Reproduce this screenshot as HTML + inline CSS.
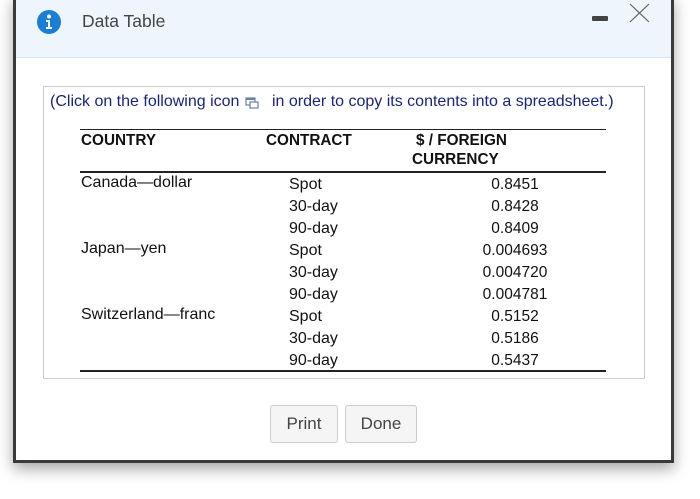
<!DOCTYPE html>
<html><head><style>
body{margin:0;width:700px;height:499px;background:#fff;position:relative;overflow:hidden;font-family:"Liberation Sans",Arial,sans-serif;}
.dlg{position:absolute;left:13px;top:-5px;width:655px;height:465px;border:3px solid #3a3a3a;border-top:none;background:#fff;box-shadow:0 6px 14px rgba(0,0,0,0.35);}
.hdr{position:absolute;left:16px;top:0;width:655px;height:57px;background:#eff5fc;border-bottom:1px solid #d6e4f2;}
.a{position:absolute;white-space:nowrap;}
.t{font-size:16px;color:#111;}
.b{font-weight:bold;font-size:15.3px;color:#111;}
.line{position:absolute;left:80px;width:526px;background:#222;}
.btn{position:absolute;top:405px;height:36px;border:1px solid #ccc;border-radius:3px;background:#f5f5f5;font-size:17px;color:#444;text-align:center;line-height:36px;}
</style></head><body>
<div class="dlg"></div>
<div class="hdr"></div>
<svg class="a" style="left:36px;top:9px" width="26" height="26"><circle cx="13" cy="13" r="12" fill="#1a7fd4"/><circle cx="13" cy="7.5" r="2" fill="#fff"/><path d="M10 11h4v7h2v2h-6v-2h2v-5h-2z" fill="#fff"/></svg>
<div class="a" style="left:82px;top:11px;font-size:17.5px;color:#444">Data Table</div>
<div class="a" style="left:592px;top:16px;width:16px;height:5px;background:#444;border-radius:1px"></div>
<svg class="a" style="left:629px;top:3px" width="22" height="20"><path d="M1 1L20 19M20 1L1 19" stroke="#666" stroke-width="1.2"/></svg>
<div class="a" style="left:43px;top:86px;width:600px;height:291px;border:1px solid #ccc"></div>
<div class="a" style="left:50px;top:93px;font-size:16px;color:#1a237e">(Click on the following icon</div>
<svg class="a" style="left:245px;top:97px" width="14" height="12"><rect x="1" y="1" width="9" height="7" fill="#fff" stroke="#6b7fa8" stroke-width="1.2"/><rect x="1" y="1" width="9" height="2" fill="#6b7fa8"/><rect x="5" y="5" width="8" height="6" fill="#fff" stroke="#6b7fa8" stroke-width="1.2"/></svg>
<div class="a" style="left:272px;top:93px;font-size:16px;color:#1a237e">in order to copy its contents into a spreadsheet.)</div>
<div class="line" style="top:129px;height:1px"></div>
<div class="a b" style="left:81px;top:132px">COUNTRY</div>
<div class="a b" style="left:266px;top:132px">CONTRACT</div>
<div class="a b" style="left:416px;top:132px">$ / FOREIGN</div>
<div class="a b" style="left:412px;top:151px">CURRENCY</div>
<div class="line" style="top:171px;height:2px"></div>
<div class="a t" style="left:81px;top:174px">Canada—dollar</div>
<div class="a t" style="left:81px;top:240px">Japan—yen</div>
<div class="a t" style="left:81px;top:306px">Switzerland—franc</div>
<div class="a t" style="left:289px;top:174px;line-height:22px">Spot<br>30-day<br>90-day<br>Spot<br>30-day<br>90-day<br>Spot<br>30-day<br>90-day</div>
<div class="a t" style="left:475px;width:80px;text-align:center;top:174px;line-height:22px;font-size:15.5px">0.8451<br>0.8428<br>0.8409<br>0.004693<br>0.004720<br>0.004781<br>0.5152<br>0.5186<br>0.5437</div>
<div class="line" style="top:370px;height:2px"></div>
<div class="btn" style="left:270px;width:66px">Print</div>
<div class="btn" style="left:345px;width:70px">Done</div>
</body></html>
